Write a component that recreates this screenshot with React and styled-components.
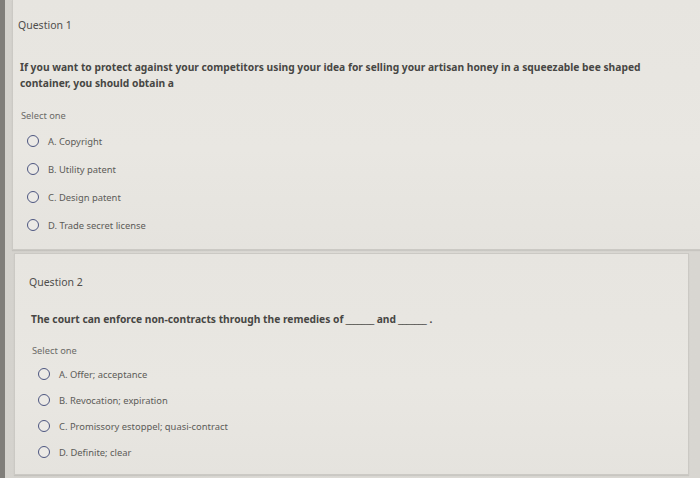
import React from "react";
import styled, { createGlobalStyle } from "styled-components";

const GlobalStyle = createGlobalStyle`
  html, body {
    margin: 0;
    padding: 0;
    background: #d9d7d2;
    overflow: hidden;
  }
  body {
    font-family: "Noto Sans", "Open Sans", "Liberation Sans", sans-serif;
  }
`;

const Page = styled.div`
  width: 700px;
  height: 478px;
  box-sizing: border-box;
  border-left: 5px solid #807e7a;
  padding: 0 0 0 7px;
  display: flex;
  flex-direction: column;
  gap: 3px;
  background: linear-gradient(90deg, #d4d2cd, #dddbd6 40%, #d8d6d1);
`;

const Card = styled.section`
  box-sizing: border-box;
  background: linear-gradient(180deg, #e7e5e0, #e9e7e2 60%, #e5e3de);
  border: 1px solid #cbc9c4;
  border-top: ${(p) => (p.$first ? "none" : "1px solid #cbc9c4")};
  border-right: ${(p) => (p.$first ? "none" : "1px solid #cbc9c4")};
  margin-left: ${(p) => p.$shift}px;
  margin-right: ${(p) => p.$right}px;
  padding: ${(p) => p.$top}px 10px ${(p) => p.$bottom}px ${(p) => p.$inset}px;
  box-shadow: 0 1px 1px rgba(0, 0, 0, 0.08);
`;

const QTitle = styled.div`
  font-size: 10.5px;
  line-height: 14px;
  color: #4f4e4c;
`;

const QText = styled.p`
  margin: ${(p) => p.$gap}px 0 0 2px;
  max-width: 640px;
  font-size: 10.25px;
  line-height: 16px;
  font-weight: 700;
  color: #474644;
`;

const Blank = styled.span`
  font-weight: 400;
  letter-spacing: -0.5px;
  margin: 0 3px 0 2px;
`;

const SelectOne = styled.div`
  margin: ${(p) => p.$gap}px 0 0 3px;
  font-size: 9.3px;
  line-height: 14px;
  color: #6b6a67;
`;

const Options = styled.div`
  margin: ${(p) => p.$gap}px 0 0 ${(p) => p.$indent}px;
  display: flex;
  flex-direction: column;
`;

const Option = styled.label`
  display: flex;
  align-items: center;
  gap: 9px;
  height: ${(p) => p.$row}px;
  font-size: 9.4px;
  color: #5c5b58;
`;

const Radio = styled.span`
  box-sizing: border-box;
  width: 12px;
  height: 12px;
  border-radius: 50%;
  border: 1.6px solid #4d5680;
  background: #eceae6;
  flex: none;
`;

const questions = [
  {
    title: "Question 1",
    text: (
      <>
        If you want to protect against your competitors using your idea for selling your artisan
        honey in a squeezable bee shaped container, you should obtain a
      </>
    ),
    options: ["A. Copyright", "B. Utility patent", "C. Design patent", "D. Trade secret license"],
    card: { $first: true, $shift: 0, $right: -4, $top: 18, $bottom: 10, $inset: 5 },
    gaps: { text: 27, select: 18, opts: 4, indent: 9, row: 28 },
  },
  {
    title: "Question 2",
    text: (
      <>
        The court can enforce non-contracts through the remedies of<Blank>_______</Blank>and
        <Blank>_______</Blank>.
      </>
    ),
    options: [
      "A. Offer; acceptance",
      "B. Revocation; expiration",
      "C. Promissory estoppel; quasi-contract",
      "D. Definite; clear",
    ],
    card: { $first: false, $shift: 2, $right: 11, $top: 21, $bottom: 9, $inset: 14 },
    gaps: { text: 22, select: 17, opts: 3, indent: 9, row: 26 },
  },
];

const App = () => (
  <>
    <GlobalStyle />
    <Page>
      {questions.map((q) => (
        <Card key={q.title} {...q.card}>
          <QTitle>{q.title}</QTitle>
          <QText $gap={q.gaps.text}>{q.text}</QText>
          <SelectOne $gap={q.gaps.select}>Select one</SelectOne>
          <Options $gap={q.gaps.opts} $indent={q.gaps.indent}>
            {q.options.map((o) => (
              <Option key={o} $row={q.gaps.row}>
                <Radio />
                {o}
              </Option>
            ))}
          </Options>
        </Card>
      ))}
    </Page>
  </>
);

export default App;
